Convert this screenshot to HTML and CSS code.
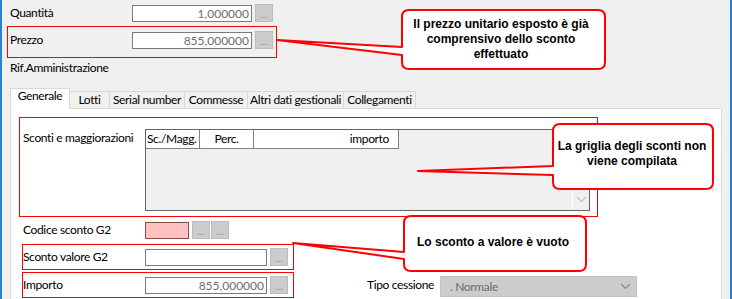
FILE: index.html
```html
<!DOCTYPE html>
<html lang="it">
<head>
    <meta charset="UTF-8">
    <title>Riga documento - sconti</title>
    <link rel="stylesheet" href="styles.css">
</head>
<body>

<div class="window">
    <div class="field row-qta">
        <span class="label">Quantità</span>
        <span class="input num">1,000000</span>
        <span class="btn">...</span>
    </div>

    <div class="mark mark-prezzo">
        <div class="field">
            <span class="label">Prezzo</span>
            <span class="input num">855,000000</span>
            <span class="btn">...</span>
        </div>
    </div>

    <div class="rif">Rif.Amministrazione</div>

    <div class="tabs">
        <span class="tab active t-gen">Generale</span>
        <span class="tab t-lotti">Lotti</span>
        <span class="tab t-serial">Serial number</span>
        <span class="tab t-comm">Commesse</span>
        <span class="tab t-altri">Altri dati gestionali</span>
        <span class="tab t-coll">Collegamenti</span>
    </div>

    <div class="panel">
        <div class="mark mark-sconti">
            <span class="label">Sconti e maggiorazioni</span>
            <div class="grid">
                <div class="grid-head">
                    <span class="col c1">Sc./Magg.</span>
                    <span class="col c2">Perc.</span>
                    <span class="col c3">importo</span>
                </div>
                <div class="grid-body">
                    <span class="grid-scroll">
                        <svg width="11" height="7" viewBox="0 0 11 7"><path d="M1 1 L5.5 5.5 L10 1" fill="none" stroke="#c4c4c4" stroke-width="1.3"/></svg>
                    </span>
                </div>
            </div>
        </div>

        <div class="field row-codice">
            <span class="label">Codice sconto G2</span>
            <span class="input pink"></span>
            <span class="btn">...</span>
            <span class="btn btn-next">...</span>
        </div>

        <div class="mark mark-row row-valore">
            <span class="label">Sconto valore G2</span>
            <span class="input wide"></span>
            <span class="btn">...</span>
        </div>

        <div class="row-importo">
            <div class="mark mark-row">
                <span class="label">Importo</span>
                <span class="input wide num">855,000000</span>
                <span class="btn">...</span>
            </div>
            <span class="tipo-label">Tipo cessione</span>
            <div class="combo">
                <span>. Normale</span>
                <svg width="11" height="7" viewBox="0 0 11 7"><path d="M1 1 L5.5 5.5 L10 1" fill="none" stroke="#8a8a8a" stroke-width="1.2"/></svg>
            </div>
        </div>
    </div>

    <!-- annotation callouts drawn over the form -->
    <div class="overlay">
        <svg class="callouts" width="732" height="299" viewBox="0 0 732 299">
            <path d="M409 10 H598 Q605 10 605 17 V62 Q605 69 598 69 H409 Q402 69 402 62 V55 L277 40 L402 47 V17 Q402 10 409 10 Z"/>
            <path d="M560 124 H706 Q713 124 713 131 V182 Q713 189 706 189 H560 Q553 189 553 182 V175 L418 171 L553 166 V131 Q553 124 560 124 Z"/>
            <path d="M411 216 H579 Q586 216 586 223 V264 Q586 271 579 271 H411 Q404 271 404 264 V259 L293 243 L404 252 V223 Q404 216 411 216 Z"/>
        </svg>
        <div class="note note-1">Il prezzo unitario esposto è già<br>comprensivo dello sconto<br>effettuato</div>
        <div class="note note-2">La griglia degli sconti non<br>viene compilata</div>
        <div class="note note-3">Lo sconto a valore è vuoto</div>
    </div>
</div>

</body>
</html>
```

FILE: styles.css
```css
body {
    margin: 0;
    background-color: #f0f0f0;
    font-family: Lato, "Liberation Sans", Arial, sans-serif;
    font-size: 12px;
    letter-spacing: -0.35px;
    color: #000;
}

.window {
    position: relative;
    box-sizing: border-box;
    width: 732px;
    height: 299px;
    overflow: hidden;
    background-color: #f0f0f0;
    border-left: 2px solid #2b7fd6;
    border-right: 2px solid #2b7fd6;
}

.field {
    display: flex;
    align-items: center;
}

.label {
    width: 122px;
    flex-shrink: 0;
    line-height: 16px;
    white-space: nowrap;
}

.input {
    box-sizing: border-box;
    width: 120px;
    height: 17px;
    background-color: #fff;
    border: 1px solid #7a7a7a;
    color: #6d6d6d;
    line-height: 15px;
    padding: 0 2px;
    letter-spacing: 0;
}

.input.num {
    text-align: right;
}

.input.wide {
    width: 122px;
}

.input.pink {
    width: 44px;
    background-color: #ffc0c0;
    border-color: #8c4b4b;
}

.btn {
    box-sizing: border-box;
    width: 18px;
    height: 18px;
    margin-left: 3px;
    background-color: #cccccc;
    border: 1px solid #bdbdbd;
    color: #8a8a8a;
    font-size: 10px;
    line-height: 18px;
    text-align: center;
    letter-spacing: 0;
}

.btn-next {
    margin-left: 1px;
}

.row-qta {
    margin: 4px 0 0 8px;
    height: 18px;
}

.mark {
    box-sizing: border-box;
    border: 1px solid #ff0000;
}

.mark-prezzo {
    margin: 4px 0 0 5px;
    width: 270px;
    height: 32px;
    padding: 4px 0 0 2px;
}

.rif {
    margin: 2px 0 0 8px;
    line-height: 16px;
}

/* tabs */
.tabs {
    display: flex;
    align-items: flex-end;
    height: 20px;
    margin: 12px 0 0 8px;
}

.tab {
    box-sizing: border-box;
    height: 17px;
    margin-left: -1px;
    border: 1px solid #d9d9d9;
    border-bottom: none;
    background-color: #f0f0f0;
    text-align: center;
    line-height: 16px;
    white-space: nowrap;
}

.tab.active {
    position: relative;
    z-index: 1;
    height: 21px;
    margin-left: 0;
    margin-bottom: -1px;
    background-color: #fff;
    line-height: 14px;
}

.t-gen { width: 60px; }
.t-lotti { width: 41px; }
.t-serial { width: 76px; }
.t-comm { width: 64px; }
.t-altri { width: 97px; }
.t-coll { width: 73px; }

.panel {
    box-sizing: border-box;
    width: 712px;
    height: 200px;
    margin-left: 8px;
    background-color: #fff;
    border: 1px solid #d9d9d9;
}

.mark-sconti {
    display: flex;
    width: 579px;
    height: 100px;
    margin: 8px 0 0 8px;
    padding: 11px 7px 5px 3px;
}

.mark-sconti .label {
    line-height: 18px;
}

.grid {
    box-sizing: border-box;
    display: flex;
    flex-direction: column;
    width: 445px;
    height: 82px;
    background-color: #f0f0f0;
    border: 1px solid #646464;
}

.grid-head {
    display: flex;
    height: 19px;
}

.col {
    box-sizing: border-box;
    height: 19px;
    background-color: #fff;
    border-right: 1px solid #808080;
    border-bottom: 1px solid #808080;
    line-height: 18px;
    white-space: nowrap;
}

.c1 { width: 54px; padding-left: 1px; }
.c2 { width: 54px; text-align: center; }
.c3 { width: 145px; text-align: right; padding-right: 9px; }

.grid-body {
    flex: 1;
    display: flex;
    justify-content: flex-end;
    align-items: flex-end;
}

.grid-scroll {
    display: flex;
    justify-content: center;
    align-items: center;
    width: 16px;
    height: 21px;
    border-left: 1px solid #fff;
}

.row-codice {
    height: 18px;
    margin: 4px 0 0 12px;
}

.mark-row {
    display: flex;
    align-items: center;
    width: 272px;
    height: 26px;
}

.row-valore {
    margin: 5px 0 0 11px;
}

.row-importo {
    display: flex;
    align-items: flex-start;
    margin: 2px 0 0 11px;
}

.tipo-label {
    width: 73px;
    margin: 5px 0 0 73px;
    line-height: 16px;
    white-space: nowrap;
}

.combo {
    box-sizing: border-box;
    display: flex;
    justify-content: space-between;
    align-items: center;
    width: 197px;
    height: 21px;
    margin-top: 4px;
    padding: 0 5px 0 9px;
    background-color: #cccccc;
    border: 1px solid #c2c2c2;
    color: #6d6d6d;
}

/* callouts */
.overlay {
    position: absolute;
    left: -2px;
    top: 0;
    width: 732px;
    height: 299px;
}

.callouts {
    position: absolute;
    left: 0;
    top: 0;
}

.callouts path {
    fill: #fff;
    stroke: #ff0000;
    stroke-width: 2;
    stroke-linejoin: round;
}

.note {
    position: absolute;
    font-family: "Liberation Sans", Arial, sans-serif;
    font-weight: bold;
    font-size: 12px;
    letter-spacing: 0;
    line-height: 15px;
    text-align: center;
    color: #000;
}

.note-1 { left: 402px; top: 17px; width: 198px; }
.note-2 { left: 553px; top: 139px; width: 158px; }
.note-3 { left: 404px; top: 235px; width: 178px; }
```
